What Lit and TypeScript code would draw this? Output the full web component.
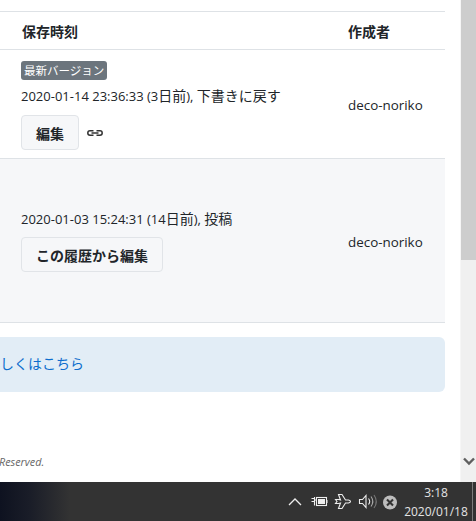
import { LitElement, html, css } from "lit";
import { customElement } from "lit/decorators.js";

@customElement("app-root")
export class AppRoot extends LitElement {
  static styles = css`
    :host { display: block; width: 476px; height: 521px; overflow: hidden; font-family: "Open Sans", "Noto Sans CJK JP", sans-serif; color: #212529; background: #fff; }
    * { box-sizing: border-box; }
    .window { display: flex; height: 482px; }
    .page { width: 460px; padding-top: 11px; overflow: hidden; }
    .scrollbar { width: 16px; background: #f0f0f0; border-left: 1px solid #f6f6f6; display: flex; flex-direction: column; }
    .thumb { height: 260px; background: #cdcdcd; }
    .track { flex: 1; display: flex; align-items: flex-end; justify-content: center; padding-bottom: 16px; }
    .table { width: 445px; border-top: 1px solid #dee2e6; }
    .row { display: grid; grid-template-columns: 347px 98px; border-bottom: 1px solid #dee2e6; align-items: center; }
    .head { height: 38px; font-weight: 700; font-size: 14px; }
    .head > div:first-child { padding-left: 22px; }
    .head > div:last-child { padding-left: 1px; }
    .main { padding-left: 21px; display: flex; flex-direction: column; align-items: flex-start; }
    .r1 { height: 109px; }
    .r1 .main { padding-top: 3px; }
    .r2 { height: 164px; background: #f6f7f9; }
    .author { font-size: 13.4px; padding: 2px 0 0 1px; }
    .badge { background: #6c757d; color: #fff; font-size: 11.5px; line-height: 19px; height: 19px; border-radius: 3px; padding: 0 3px; margin-bottom: 6px; }
    .date { font-size: 13px; line-height: 20px; margin-bottom: 9px; white-space: nowrap; }
    .r2 .date { margin-bottom: 8px; }
    .cjk { font-size: 14px; }
    .actions { display: flex; align-items: center; gap: 8px; }
    .btn { height: 35px; padding: 0 14px; background: #f6f7f9; border: 1px solid #e1e4e8; border-radius: 4px; font: inherit; font-size: 14px; font-weight: 700; color: #212529; }
    .alert { width: 445px; height: 55px; margin-top: 14px; background: #e2edf6; border-radius: 0 6px 6px 0; color: #0d6ecd; font-size: 14px; line-height: 54px; white-space: nowrap; overflow: hidden; }
    .alert span { margin-left: -14px; }
    .copy { margin-top: 62px; font-size: 10.8px; font-style: italic; color: #666; white-space: nowrap; margin-left: -1px; }
    .taskbar { height: 39px; display: flex; align-items: center; justify-content: flex-end; color: #e4e4e4; background: linear-gradient(90deg, #0e1220 0, #1a1d28 30px, #333 70px, #333 100%); }
    .tray { display: block; }
    .clock { width: 74px; text-align: center; font-size: 12px; line-height: 19px; }
    .edge { width: 2px; height: 39px; border-left: 1px solid #7c7c7c; margin-left: -1px; margin-right: 2px; }
  `;

  render() {
    return html`
      <div class="window">
        <div class="page">
          <div class="table">
            <div class="row head"><div>保存時刻</div><div>作成者</div></div>
            <div class="row r1">
              <div class="main">
                <div class="badge">最新バージョン</div>
                <div class="date">2020-01-14 23:36:33 (3<span class="cjk">日前</span>), <span class="cjk">下書きに戻す</span></div>
                <div class="actions">
                  <button class="btn">編集</button>
                  <svg width="16" height="6" viewBox="0 0 16 6" fill="none" stroke="#333" stroke-width="1.5"><path d="M6.5 .8 H3 a2.2 2.2 0 0 0 0 4.4 H6.5"/><path d="M9.5 .8 H13 a2.2 2.2 0 0 1 0 4.4 H9.5"/><path d="M4.5 3 H11.5"/></svg>
                </div>
              </div>
              <div class="author">deco-noriko</div>
            </div>
            <div class="row r2">
              <div class="main">
                <div class="date">2020-01-03 15:24:31 (14<span class="cjk">日前</span>), <span class="cjk">投稿</span></div>
                <button class="btn">この履歴から編集</button>
              </div>
              <div class="author">deco-noriko</div>
            </div>
          </div>
          <div class="alert"><span>詳しくはこちら</span></div>
          <div class="copy">Reserved.</div>
        </div>
        <div class="scrollbar">
          <div class="thumb"></div>
          <div class="track">
            <svg width="12" height="9" viewBox="0 0 12 9" fill="none" stroke="#5f5f5f" stroke-width="2.4"><path d="M1 1.5 L6 6.5 L11 1.5"/></svg>
          </div>
        </div>
      </div>
      <div class="taskbar">
        <svg class="tray" width="115" height="39" viewBox="285 482 115 39" fill="none" stroke="#eee" stroke-width="1.1">
          <path d="M290 505 L296 499 L302 505" stroke-width="1.3"/>
          <path d="M312.5 498.5 h3 M312.5 501.5 h3 M315.5 497 v6 M315.5 500 h2 M315.5 503 v2.5"/>
          <rect x="317.5" y="497.5" width="10" height="8"/>
          <rect x="319" y="499" width="7" height="5" fill="#eee" stroke="none"/>
          <rect x="327.5" y="500" width="1" height="3" fill="#eee" stroke="none"/>
          <path d="M336.5 499.5 l1.5 2 l-1.5 2 h3 l2 -.5 l-2 5.5 h3.5 l3.5 -5.5 h3 q2 -.5 2 -1.5 t-2 -1.5 h-3 l-3.5 -5.5 h-3.5 l2 5.5 l-2 -.5 z"/>
          <path d="M360.5 499.5 h3 l3.5 -4 v12 l-3.5 -4 h-3 z"/>
          <path d="M369.5 498.5 q2.4 3 0 6"/>
          <path d="M372 496.5 q3.6 5 0 10" stroke="#a8a8a8"/>
          <path d="M375 495 q4.6 6.5 0 13" stroke="#777"/>
          <circle cx="391" cy="502.5" r="7" fill="#bdbdbd" stroke="none"/>
          <path d="M388 499.5 L394 505.5 M394 499.5 L388 505.5" stroke="#333" stroke-width="2.1"/>
        </svg>
        <div class="clock"><div>3:18</div><div>2020/01/18</div></div>
        <div class="edge"></div>
      </div>
    `;
  }
}
